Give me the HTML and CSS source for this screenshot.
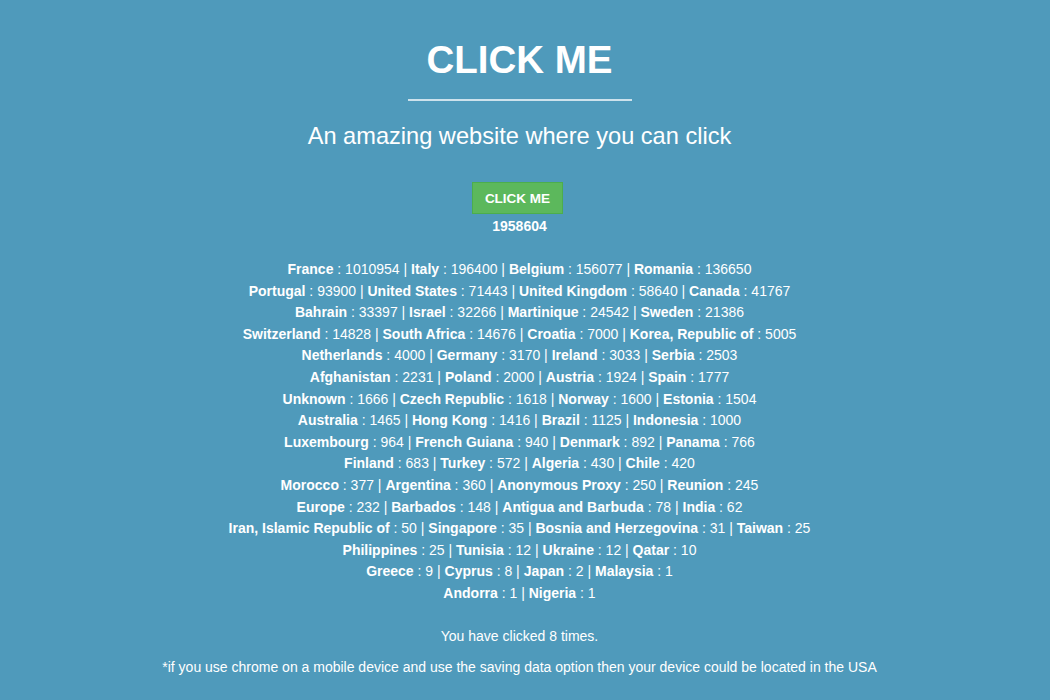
FILE: index.html
```html
<!DOCTYPE html>
<html>
<head>
<meta charset="utf-8">
<link rel="stylesheet" href="styles.css">
</head>
<body>
<main class="page">
  <h1 class="title">CLICK ME</h1>
  <hr class="rule">
  <p class="subtitle">An amazing website where you can click</p>
  <button class="click-btn">CLICK ME</button>
  <div class="total">1958604</div>
  <div class="countries">
    <div class="line"><b>France</b> : 1010954 | <b>Italy</b> : 196400 | <b>Belgium</b> : 156077 | <b>Romania</b> : 136650</div>
    <div class="line"><b>Portugal</b> : 93900 | <b>United States</b> : 71443 | <b>United Kingdom</b> : 58640 | <b>Canada</b> : 41767</div>
    <div class="line"><b>Bahrain</b> : 33397 | <b>Israel</b> : 32266 | <b>Martinique</b> : 24542 | <b>Sweden</b> : 21386</div>
    <div class="line"><b>Switzerland</b> : 14828 | <b>South Africa</b> : 14676 | <b>Croatia</b> : 7000 | <b>Korea, Republic of</b> : 5005</div>
    <div class="line"><b>Netherlands</b> : 4000 | <b>Germany</b> : 3170 | <b>Ireland</b> : 3033 | <b>Serbia</b> : 2503</div>
    <div class="line"><b>Afghanistan</b> : 2231 | <b>Poland</b> : 2000 | <b>Austria</b> : 1924 | <b>Spain</b> : 1777</div>
    <div class="line"><b>Unknown</b> : 1666 | <b>Czech Republic</b> : 1618 | <b>Norway</b> : 1600 | <b>Estonia</b> : 1504</div>
    <div class="line"><b>Australia</b> : 1465 | <b>Hong Kong</b> : 1416 | <b>Brazil</b> : 1125 | <b>Indonesia</b> : 1000</div>
    <div class="line"><b>Luxembourg</b> : 964 | <b>French Guiana</b> : 940 | <b>Denmark</b> : 892 | <b>Panama</b> : 766</div>
    <div class="line"><b>Finland</b> : 683 | <b>Turkey</b> : 572 | <b>Algeria</b> : 430 | <b>Chile</b> : 420</div>
    <div class="line"><b>Morocco</b> : 377 | <b>Argentina</b> : 360 | <b>Anonymous Proxy</b> : 250 | <b>Reunion</b> : 245</div>
    <div class="line"><b>Europe</b> : 232 | <b>Barbados</b> : 148 | <b>Antigua and Barbuda</b> : 78 | <b>India</b> : 62</div>
    <div class="line"><b>Iran, Islamic Republic of</b> : 50 | <b>Singapore</b> : 35 | <b>Bosnia and Herzegovina</b> : 31 | <b>Taiwan</b> : 25</div>
    <div class="line"><b>Philippines</b> : 25 | <b>Tunisia</b> : 12 | <b>Ukraine</b> : 12 | <b>Qatar</b> : 10</div>
    <div class="line"><b>Greece</b> : 9 | <b>Cyprus</b> : 8 | <b>Japan</b> : 2 | <b>Malaysia</b> : 1</div>
    <div class="line"><b>Andorra</b> : 1 | <b>Nigeria</b> : 1</div>
  </div>
  <p class="clicked">You have clicked 8 times.</p>
  <p class="note">*if you use chrome on a mobile device and use the saving data option then your device could be located in the USA</p>
</main>
</body>
</html>
```

FILE: styles.css
```css
html, body {
  margin: 0;
  padding: 0;
  background: #4f9abb;
}
body {
  font-family: "Liberation Sans", Arial, sans-serif;
  color: #ffffff;
}
.page {
  display: flex;
  flex-direction: column;
  align-items: center;
  text-align: center;
  padding-top: 36px;
  padding-right: 11px;
}
.title {
  margin: 0;
  font-size: 38.5px;
  font-weight: bold;
  line-height: 48px;
}
.rule {
  width: 224px;
  border: 0;
  border-top: 2px solid #cde2ec;
  margin: 15px 0 0 0;
}
.subtitle {
  margin: 21px 0 0 0;
  font-size: 23.6px;
  line-height: 28px;
}
.click-btn {
  margin: 32px 4px 0 0;
  width: 91px;
  height: 32px;
  background: #5cb85c;
  border: 1px solid #4cae4c;
  color: #fff;
  font-family: "Liberation Sans", Arial, sans-serif;
  font-weight: bold;
  font-size: 13.5px;
  padding: 0;
}
.total {
  margin-top: 4px;
  font-size: 14px;
  font-weight: bold;
  line-height: 16px;
}
.countries {
  margin-top: 25px;
  font-size: 14px;
  line-height: 21.6px;
}
.clicked {
  margin: 23px 0 0 0;
  font-size: 14px;
  line-height: 16px;
}
.note {
  margin: 15px 0 0 0;
  font-size: 14px;
  line-height: 16px;
}
```
